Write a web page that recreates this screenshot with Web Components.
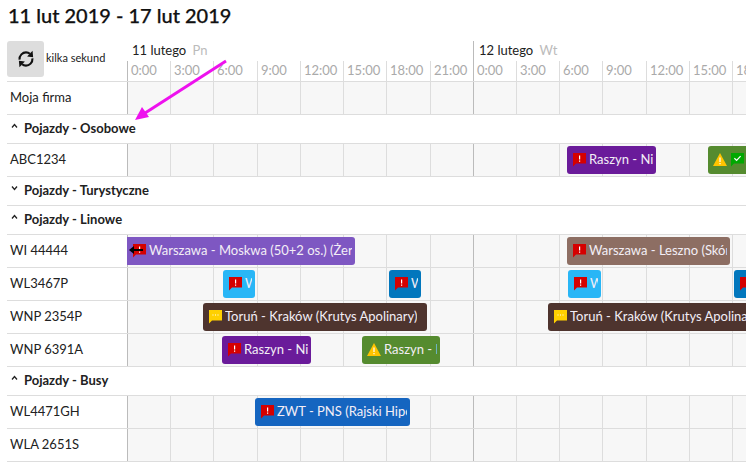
<!DOCTYPE html>
<html lang="pl">
<head>
<meta charset="utf-8">
<title>Harmonogram</title>
<style>
    html, body { margin: 0; height: 100%; overflow: hidden; background: #fff; }
    body {
        font-family: Lato, "Liberation Sans", sans-serif;
        font-size: 13px;
        color: #212121;
        --cols: 43px 43px 44px 43px 43px 43px 44px 43px 43px 43px 43px 44px 43px 43px 43px 43px;
    }
</style>
</head>
<body>
<tl-page heading="11 lut 2019 - 17 lut 2019">
    <tl-header updated="kilka sekund">
        <tl-day first name="11 lutego" short="Pn" hours="0:00,3:00,6:00,9:00,12:00,15:00,18:00,21:00" widths="43px 43px 44px 43px 43px 43px 44px 43px"></tl-day>
        <tl-day name="12 lutego" short="Wt" hours="0:00,3:00,6:00,9:00,12:00,15:00,18:00" widths="43px 43px 43px 44px 43px 43px 43px"></tl-day>
    </tl-header>
    <tl-row label="Moja firma"></tl-row>
    <tl-group label="Pojazdy - Osobowe" open></tl-group>
    <tl-row label="ABC1234">
        <tl-event from="440" to="529" color="#6a1b9a" icons="alert" text="Raszyn - Nie"></tl-event>
        <tl-event from="581" to="700" color="#558b2f" icons="warn,ok" text=""></tl-event>
    </tl-row>
    <tl-group label="Pojazdy - Turystyczne"></tl-group>
    <tl-group label="Pojazdy - Linowe" open></tl-group>
    <tl-row label="WI 44444">
        <tl-event from="0" to="228" color="#7e57c2" icons="alert" text="Warszawa - Moskwa (50+2 os.) (Żer" square></tl-event>
        <tl-event from="440" to="603" color="#8d6e63" icons="alert" text="Warszawa - Leszno (Skór"></tl-event>
    </tl-row>
    <tl-row label="WL3467P">
        <tl-event from="96" to="128" color="#29b6f6" icons="alert" text="Wa"></tl-event>
        <tl-event from="262" to="294" color="#0277bd" icons="alert" text="Wa"></tl-event>
        <tl-event from="441" to="474" color="#29b6f6" icons="alert" text="Wa"></tl-event>
        <tl-event from="607" to="700" color="#0277bd" icons="alert" text=""></tl-event>
    </tl-row>
    <tl-row label="WNP 2354P">
        <tl-event from="76" to="300" color="#4e342e" icons="note" text="Toruń - Kraków (Krutys Apolinary)"></tl-event>
        <tl-event from="421" to="700" color="#4e342e" icons="note" text="Toruń - Kraków (Krutys Apolinary)"></tl-event>
    </tl-row>
    <tl-row label="WNP 6391A">
        <tl-event from="95" to="184" color="#6a1b9a" icons="alert" text="Raszyn - Nie"></tl-event>
        <tl-event from="235" to="313" color="#558b2f" icons="warn" text="Raszyn - Ni"></tl-event>
    </tl-row>
    <tl-group label="Pojazdy - Busy" open></tl-group>
    <tl-row label="WL4471GH">
        <tl-event from="128" to="283" color="#1565c0" icons="alert" text="ZWT - PNS (Rajski Hipo"></tl-event>
    </tl-row>
    <tl-row label="WLA 2651S"></tl-row>
</tl-page>

<script>
const ICONS = {
    alert: `<svg width="14" height="14" viewBox="0 0 14 14"><path fill="#d50000" d="M1 0h13v10.500H4L1 13.500z"/><path fill="#fff" d="M7 2.500h1.200v4H7zM7 7.500h1.200v1.200H7z"/></svg>`,
    note: `<svg width="14" height="14" viewBox="0 0 14 14"><path fill="#ffd000" d="M1 0h13v10.500H4L1 13.500z"/><path fill="#fff" d="M4.500 4.500h1v1h-1zM7 4.500h1v1H7zM9.500 4.500h1v1h-1z"/></svg>`,
    warn: `<svg width="14" height="14" viewBox="0 0 14 14"><path fill="#ffc400" d="M7 0 14 13H0z"/><path fill="#fff" d="M6.400 4.500h1.200v4.500H6.400zM6.400 10h1.200v1.200H6.400z"/></svg>`,
    ok: `<svg width="14" height="14" viewBox="0 0 14 14"><path fill="#00a800" d="M1 0h13v10.500H4L1 13.500z"/><path fill="none" stroke="#fff" stroke-width="1.200" d="M4.400 5.300 6.600 7.400 10.600 3.100"/></svg>`
};

class TlPage extends HTMLElement {
    constructor() {
        super();
        this.attachShadow({mode:'open'});
        this.shadowRoot.innerHTML = `
            <style>
                :host {
                    display: block;
                    position: relative;
                    padding: 0 0 0 7px;
                    width: 900px;
                }
                h1 {
                    margin: 0;
                    padding: 3px 0 0 1px;
                    height: 41px;
                    box-sizing: border-box;
                    font-size: 20px;
                    line-height: 24px;
                    font-weight: 500;
                    color: #111;
                    -webkit-text-stroke: 0.25px #111;
                }
                #arrow {
                    position: absolute;
                    left: 130px;
                    top: 55px;
                }
                #cursor {
                    position: absolute;
                    left: 128px;
                    top: 244px;
                }
            </style>
            <h1></h1>
            <slot></slot>
            <svg id="arrow" width="104" height="72" viewBox="0 0 104 72">
                <path d="M96 6 12 60" stroke="#ee11ee" stroke-width="3" fill="none"/>
                <path d="M5 65 12 52 19 62z" fill="#ee11ee"/>
            </svg>
            <svg id="cursor" width="16" height="12" viewBox="0 0 16 12">
                <path d="M1 6 6 2v3h9v2H6v3z" fill="#000"/>
            </svg>
        `;
        this.shadowRoot.querySelector('h1').textContent = this.getAttribute('heading');
    }
}

class TlHeader extends HTMLElement {
    constructor() {
        super();
        this.attachShadow({mode:'open'});
        this.shadowRoot.innerHTML = `
            <style>
                :host {
                    display: flex;
                    height: 40px;
                    border-bottom: 1px solid #ddd;
                }
                #refresh {
                    flex: 0 0 120px;
                    display: flex;
                    align-items: flex-start;
                    gap: 2px;
                }
                button {
                    width: 37px;
                    height: 36px;
                    padding: 0;
                    border: 0;
                    border-radius: 3px;
                    background: #ddd;
                    display: flex;
                    align-items: center;
                    justify-content: center;
                }
                span {
                    font-size: 11px;
                    line-height: 34px;
                    color: #212121;
                }
                #days {
                    display: flex;
                }
            </style>
            <div id="refresh">
                <button>
                    <svg width="18" height="20" viewBox="0 0 16 18" fill="none">
                        <path d="M2.200 9.500C1.900 5.700 5 3 8 3c1.500 0 2.600.4 3.500 1.200" stroke="#111" stroke-width="1.900"/>
                        <path d="M13.800 8.500C14.100 12.300 11 15 8 15c-1.500 0-2.600-.4-3.500-1.200" stroke="#111" stroke-width="1.900"/>
                        <path d="M9 6.800 14.400 7.400 13.900 1.600z" fill="#111"/>
                        <path d="M7 11.200 1.600 10.600 2.100 16.400z" fill="#111"/>
                    </svg>
                </button>
                <span></span>
            </div>
            <div id="days"><slot></slot></div>
        `;
        this.shadowRoot.querySelector('span').textContent = this.getAttribute('updated');
    }
}

class TlDay extends HTMLElement {
    constructor() {
        super();
        this.attachShadow({mode:'open'});
        const hours = this.getAttribute('hours').split(',');
        this.shadowRoot.innerHTML = `
            <style>
                :host {
                    display: block;
                }
                :host(:not([first])) {
                    box-shadow: inset 1px 0 0 #bbb;
                }
                #name {
                    height: 20px;
                    padding-left: 5px;
                    line-height: 18px;
                    white-space: nowrap;
                    color: #212121;
                }
                :host(:not([first])) #name {
                    padding-left: 6px;
                }
                #name i {
                    font-style: normal;
                    color: #bbb;
                    margin-left: 3px;
                }
                #hours {
                    display: grid;
                    height: 20px;
                }
                #hours div {
                    border-left: 1px solid #ddd;
                    padding-left: 3px;
                    line-height: 19px;
                    color: #aaa;
                    white-space: nowrap;
                    overflow: hidden;
                }
                #hours div:first-child {
                    border-left-color: #bbb;
                }
            </style>
            <div id="name"><span></span> <i></i></div>
            <div id="hours" style="grid-template-columns:${this.getAttribute('widths')}">
                ${hours.map(h => `<div>${h}</div>`).join('')}
            </div>
        `;
        this.shadowRoot.querySelector('span').textContent = this.getAttribute('name');
        this.shadowRoot.querySelector('i').textContent = this.getAttribute('short');
    }
}

class TlRow extends HTMLElement {
    constructor() {
        super();
        this.attachShadow({mode:'open'});
        const cells = '<div></div>'.repeat(16);
        this.shadowRoot.innerHTML = `
            <style>
                :host {
                    display: flex;
                    height: 33px;
                    box-sizing: border-box;
                    border-bottom: 1px solid #ddd;
                }
                #label {
                    flex: 0 0 120px;
                    box-sizing: border-box;
                    padding-left: 3px;
                    line-height: 31px;
                }
                #track {
                    position: relative;
                    flex: 1;
                }
                #cells {
                    display: grid;
                    grid-template-columns: var(--cols);
                    height: 100%;
                    background: #f7f7f7;
                }
                #cells div {
                    border-left: 1px solid #ddd;
                }
                #cells div:nth-child(8n+1) {
                    border-left-color: #bbb;
                }
            </style>
            <div id="label"></div>
            <div id="track">
                <div id="cells">${cells}</div>
                <slot></slot>
            </div>
        `;
        this.shadowRoot.querySelector('#label').textContent = this.getAttribute('label');
    }
}

class TlGroup extends HTMLElement {
    constructor() {
        super();
        this.attachShadow({mode:'open'});
        const chevron = this.hasAttribute('open') ? 'M1 4.500 3.500 1.500 6 4.500' : 'M1 1.500 3.500 4.500 6 1.500';
        this.shadowRoot.innerHTML = `
            <style>
                :host {
                    display: flex;
                    align-items: center;
                    gap: 6px;
                    height: 29px;
                    box-sizing: border-box;
                    padding: 0 0 2px 4px;
                    border-bottom: 1px solid #ddd;
                    font-weight: 700;
                    font-size: 13px;
                    color: #212121;
                }
                svg {
                    margin-bottom: 4px;
                }
            </style>
            <svg width="7" height="6" viewBox="0 0 7 6"><path d="${chevron}" fill="none" stroke="#212121" stroke-width="1.300"/></svg>
            <span></span>
        `;
        this.shadowRoot.querySelector('span').textContent = this.getAttribute('label');
    }
}

class TlEvent extends HTMLElement {
    constructor() {
        super();
        this.attachShadow({mode:'open'});
        const from = +this.getAttribute('from');
        const to = +this.getAttribute('to');
        const icons = this.getAttribute('icons').split(',').map(n => ICONS[n]).join('');
        this.shadowRoot.innerHTML = `
            <style>
                :host {
                    position: absolute;
                    left: ${from}px;
                    width: ${to - from}px;
                    top: 2px;
                    height: 28px;
                    box-sizing: border-box;
                    padding: 0 3px 0 5px;
                    display: flex;
                    align-items: center;
                    gap: 3px;
                    overflow: hidden;
                    border-radius: 3px;
                    background: ${this.getAttribute('color')};
                    color: #f3eef6;
                    white-space: nowrap;
                }
                :host([square]) {
                    border-radius: 0 3px 3px 0;
                }
                #icons {
                    display: flex;
                    flex: none;
                    gap: 3px;
                }
                svg {
                    display: block;
                }
                span {
                    overflow: hidden;
                    padding-bottom: 2px;
                }
            </style>
            <div id="icons">${icons}</div>
            <span></span>
        `;
        this.shadowRoot.querySelector('span').textContent = this.getAttribute('text');
    }
}

customElements.define('tl-page', TlPage);
customElements.define('tl-header', TlHeader);
customElements.define('tl-day', TlDay);
customElements.define('tl-row', TlRow);
customElements.define('tl-group', TlGroup);
customElements.define('tl-event', TlEvent);
</script>
</body>
</html>
